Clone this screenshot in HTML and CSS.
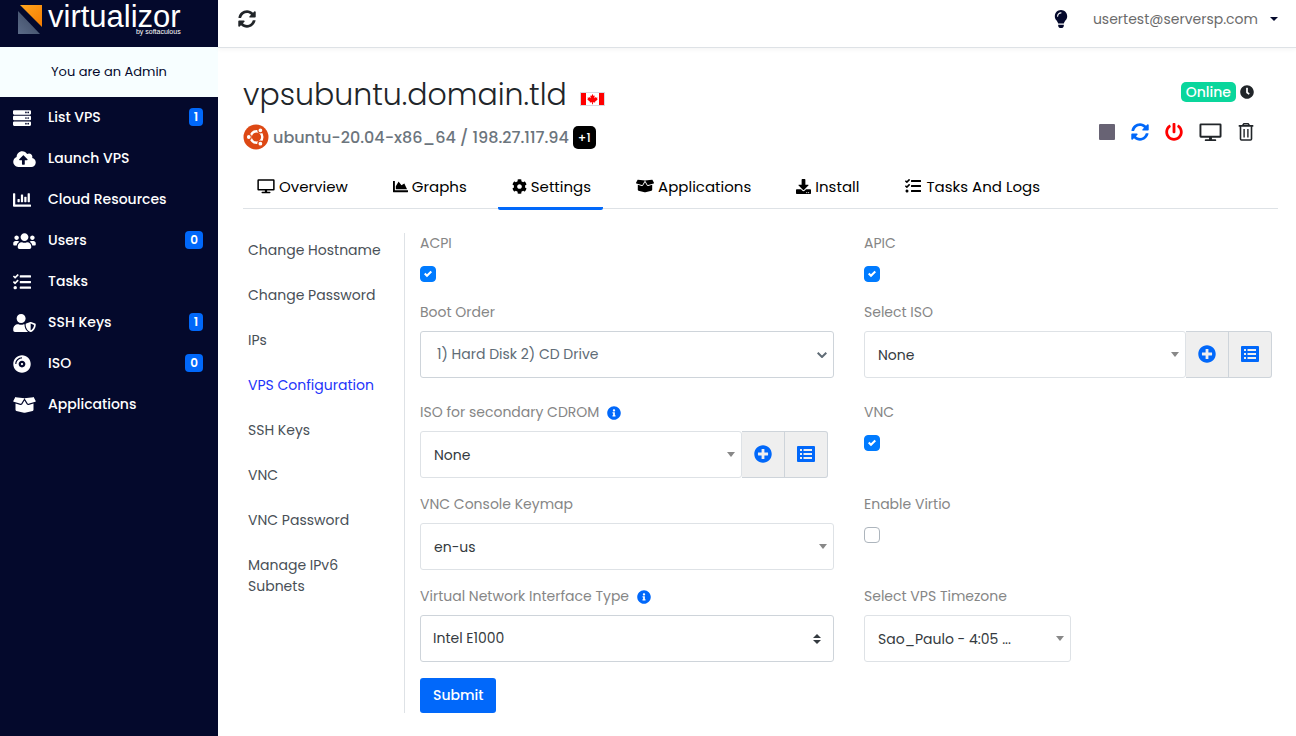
FILE: index.html
```html
<!DOCTYPE html>
<html lang="en">
<head>
  <meta charset="UTF-8">
  <meta name="viewport" content="width=device-width, initial-scale=1.0">
  <title>Virtualizor</title>
  <link rel="stylesheet" href="styles.css">
</head>
<body>

  <!-- Icon set -->
  <svg class="sprite" aria-hidden="true">
    <symbol id="i-sync" viewBox="0 0 512 512"><path d="M370.72 133.28C339.458 104.008 298.888 87.962 255.848 88c-77.458.068-144.328 53.178-162.791 126.85-1.344 5.363-6.122 9.15-11.651 9.15H24.103c-7.498 0-13.194-6.807-11.807-14.176C33.933 94.924 134.813 8 256 8c66.448 0 126.791 26.136 171.315 68.685L463.03 40.97C478.149 25.851 504 36.559 504 57.941V192c0 13.255-10.745 24-24 24H345.941c-21.382 0-32.09-25.851-16.971-40.971l41.75-41.749zM32 296h134.059c21.382 0 32.09 25.851 16.971 40.971l-41.75 41.75c31.262 29.273 71.835 45.319 114.876 45.28 77.418-.07 144.315-53.144 162.787-126.849 1.344-5.363 6.122-9.15 11.651-9.15h57.304c7.498 0 13.194 6.807 11.807 14.176C478.067 417.076 377.187 504 256 504c-66.448 0-126.791-26.136-171.315-68.685L48.97 471.03C33.851 486.149 8 475.441 8 454.059V320c0-13.255 10.745-24 24-24z"/></symbol>
    <symbol id="i-server" viewBox="0 0 512 512"><path fill-rule="evenodd" d="M32 32h448a32 32 0 0 1 32 32v64a32 32 0 0 1-32 32H32a32 32 0 0 1-32-32V64a32 32 0 0 1 32-32zm400 40a24 24 0 1 0 0 48 24 24 0 1 0 0-48zm-64 0a24 24 0 1 0 0 48 24 24 0 1 0 0-48zM32 192h448a32 32 0 0 1 32 32v64a32 32 0 0 1-32 32H32a32 32 0 0 1-32-32v-64a32 32 0 0 1 32-32zm400 40a24 24 0 1 0 0 48 24 24 0 1 0 0-48zm-64 0a24 24 0 1 0 0 48 24 24 0 1 0 0-48zM32 352h448a32 32 0 0 1 32 32v64a32 32 0 0 1-32 32H32a32 32 0 0 1-32-32v-64a32 32 0 0 1 32-32zm400 40a24 24 0 1 0 0 48 24 24 0 1 0 0-48zm-64 0a24 24 0 1 0 0 48 24 24 0 1 0 0-48z"/></symbol>
    <symbol id="i-upload" viewBox="0 0 640 512"><path d="M537.6 226.6c4.1-10.7 6.4-22.4 6.4-34.6 0-53-43-96-96-96-19.7 0-38.1 6-53.3 16.2C367 64.2 315.3 32 256 32c-88.4 0-160 71.6-160 160 0 2.7.1 5.4.2 8.1C40.2 219.8 0 273.2 0 336c0 79.5 64.5 144 144 144h368c70.7 0 128-57.3 128-128 0-61.9-44-113.6-102.4-125.4zM393.4 288H328v112c0 8.8-7.2 16-16 16h-48c-8.8 0-16-7.2-16-16V288h-65.4c-14.3 0-21.4-17.2-11.3-27.3l105.4-105.4c6.2-6.2 16.4-6.2 22.6 0l105.4 105.4c10.1 10.1 2.9 27.3-11.3 27.3z"/></symbol>
    <symbol id="i-bars" viewBox="0 0 512 512"><path d="M332.8 320h38.4c6.4 0 12.8-6.4 12.8-12.8V172.8c0-6.4-6.4-12.8-12.8-12.8h-38.4c-6.4 0-12.8 6.4-12.8 12.8v134.4c0 6.4 6.4 12.8 12.8 12.8zm96 0h38.4c6.4 0 12.8-6.4 12.8-12.8V76.8c0-6.4-6.4-12.8-12.8-12.8h-38.4c-6.4 0-12.8 6.4-12.8 12.8v230.4c0 6.4 6.4 12.8 12.8 12.8zm-288 0h38.4c6.4 0 12.8-6.4 12.8-12.8v-70.4c0-6.4-6.4-12.8-12.8-12.8h-38.4c-6.4 0-12.8 6.4-12.8 12.8v70.4c0 6.4 6.4 12.8 12.8 12.8zm96 0h38.4c6.4 0 12.8-6.4 12.8-12.8V108.8c0-6.4-6.4-12.8-12.8-12.8h-38.4c-6.4 0-12.8 6.4-12.8 12.8v198.4c0 6.4 6.4 12.8 12.8 12.8zM496 384H64V80c0-8.84-7.16-16-16-16H16C7.16 64 0 71.16 0 80v336c0 17.67 14.33 32 32 32h464c8.84 0 16-7.16 16-16v-32c0-8.84-7.16-16-16-16z"/></symbol>
    <symbol id="i-users" viewBox="0 0 640 512"><path d="M96 224c35.3 0 64-28.7 64-64s-28.7-64-64-64-64 28.7-64 64 28.7 64 64 64zm448 0c35.3 0 64-28.7 64-64s-28.7-64-64-64-64 28.7-64 64 28.7 64 64 64zm32 32h-64c-17.6 0-33.5 7.1-45.1 18.6 40.3 22.1 68.9 62 75.1 109.4h66c17.7 0 32-14.3 32-32v-32c0-35.3-28.7-64-64-64zm-256 0c61.9 0 112-50.1 112-112S381.9 32 320 32 208 82.1 208 144s50.1 112 112 112zm76.8 32h-8.3c-20.8 10-43.9 16-68.5 16s-47.6-6-68.5-16h-8.3C179.6 288 128 339.6 128 403.2V432c0 26.5 21.5 48 48 48h288c26.5 0 48-21.5 48-48v-28.8c0-63.6-51.6-115.2-115.2-115.2zm-223.7-13.4C161.5 263.1 145.6 256 128 256H64c-35.3 0-64 28.7-64 64v32c0 17.7 14.3 32 32 32h65.9c6.3-47.4 34.9-87.3 75.2-109.4z"/></symbol>
    <symbol id="i-tasks" viewBox="0 0 512 512"><path d="M139.61 35.5a12 12 0 0 0-17 0L58.93 98.81l-22.7-22.12a12 12 0 0 0-17 0L3.53 92.41a12 12 0 0 0 0 17l47.59 47.4a12.78 12.78 0 0 0 17.61 0l15.59-15.62L156.52 69a12.09 12.09 0 0 0 .09-17zm0 159.19a12 12 0 0 0-17 0l-63.68 63.72-22.7-22.1a12 12 0 0 0-17 0L3.53 252a12 12 0 0 0 0 17L51 316.5a12.77 12.77 0 0 0 17.6 0l15.7-15.69 72.2-72.22a12 12 0 0 0 .09-16.9zM64 368c-26.49 0-48.59 21.5-48.59 48S37.53 464 64 464a48 48 0 0 0 0-96zm432 16H208a16 16 0 0 0-16 16v32a16 16 0 0 0 16 16h288a16 16 0 0 0 16-16v-32a16 16 0 0 0-16-16zm0-320H208a16 16 0 0 0-16 16v32a16 16 0 0 0 16 16h288a16 16 0 0 0 16-16V80a16 16 0 0 0-16-16zm0 160H208a16 16 0 0 0-16 16v32a16 16 0 0 0 16 16h288a16 16 0 0 0 16-16v-32a16 16 0 0 0-16-16z"/></symbol>
    <symbol id="i-shield" viewBox="0 0 640 512"><path d="M622.3 271.1l-115.2-45c-4.1-1.6-12.6-3.7-22.2 0l-115.2 45c-10.7 4.2-17.7 14-17.7 24.9 0 111.6 68.7 188.8 132.9 213.9 9.6 3.7 18 1.6 22.2 0C558.4 489.9 640 420.5 640 296c0-10.9-7-20.7-17.7-24.9zM496 462.4V273.3l95.5 37.3c-5.6 87.1-60.9 135.4-95.5 151.8zM224 256c70.7 0 128-57.3 128-128S294.7 0 224 0 96 57.3 96 128s57.3 128 128 128zm96 40c0-2.5.8-4.8 1.1-7.2-2.5-.1-4.9-.8-7.5-.8h-16.7c-22.2 10.2-46.9 16-72.9 16s-50.6-5.8-72.9-16h-16.7C60.2 288 0 348.2 0 422.4V464c0 26.5 21.5 48 48 48h352c6.8 0 13.3-1.5 19.2-4-54-42.9-99.2-116.7-99.2-212z"/></symbol>
    <symbol id="i-disc" viewBox="0 0 496 512"><path d="M248 8C111 8 0 119 0 256s111 248 248 248 248-111 248-248S385 8 248 8zM88 256H56c0-105.9 86.1-192 192-192v32c-88.2 0-160 71.8-160 160zm160 96c-53 0-96-43-96-96s43-96 96-96 96 43 96 96-43 96-96 96zm0-128c-17.7 0-32 14.3-32 32s14.3 32 32 32 32-14.3 32-32-14.3-32-32-32z"/></symbol>
    <symbol id="i-box" viewBox="0 0 640 512"><path d="M425.7 256c-16.9 0-32.8-9-41.4-23.4L320 126l-64.2 106.6c-8.7 14.5-24.6 23.5-41.5 23.5-4.5 0-9-.6-13.3-1.9L64 215v178c0 14.7 10 27.5 24.2 31l216.2 54.1c10.2 2.5 20.9 2.5 31 0L551.8 424c14.2-3.6 24.2-16.4 24.2-31V215l-137 39.1c-4.3 1.3-8.8 1.9-13.3 1.9zm212.6-112.2L586.8 41c-3.1-6.2-9.8-9.8-16.7-8.9L320 64l91.7 152.1c3.8 6.3 11.4 9.3 18.5 7.3l197.9-56.5c9.9-2.9 14.7-13.9 10.2-23.1zM53.2 41L1.7 143.8c-4.6 9.2.3 20.2 10.1 23l197.9 56.5c7.1 2 14.7-1 18.5-7.3L320 64 69.8 32.1c-6.9-.8-13.5 2.7-16.6 8.9z"/></symbol>
    <symbol id="i-bulb" viewBox="0 0 352 512"><path d="M96.06 454.35c.01 6.29 1.87 12.45 5.36 17.69l17.09 25.69a31.99 31.99 0 0 0 26.64 14.28h61.71a31.99 31.99 0 0 0 26.64-14.28l17.09-25.69a31.989 31.989 0 0 0 5.36-17.69l.04-38.35H96.01l.05 38.35zM0 176c0 44.37 16.45 84.85 43.56 115.78 16.52 18.85 42.36 58.23 52.21 91.45.04.26.07.52.11.78h160.24c.04-.26.07-.51.11-.78 9.85-33.22 35.69-72.6 52.21-91.45C335.55 260.85 352 220.37 352 176 352 78.61 272.91-.3 175.45 0 73.44.31 0 82.97 0 176zm176-80c-44.11 0-80 35.89-80 80 0 8.84-7.16 16-16 16s-16-7.16-16-16c0-61.76 50.24-112 112-112 8.84 0 16 7.16 16 16s-7.16 16-16 16z"/></symbol>
    <symbol id="i-clock" viewBox="0 0 512 512"><path d="M256,8C119,8,8,119,8,256S119,504,256,504,504,393,504,256,393,8,256,8Zm92.49,313h0l-20,25a16,16,0,0,1-22.49,2.5h0l-67-49.72a40,40,0,0,1-15-31.23V112a16,16,0,0,1,16-16h32a16,16,0,0,1,16,16V256l58,42.5A16,16,0,0,1,348.49,321Z"/></symbol>
    <symbol id="i-power" viewBox="0 0 512 512"><path d="M400 54.1c63 45 104 118.6 104 201.9 0 136.8-110.8 247.7-247.5 248C120 504.3 8.2 393 8 256.4 7.9 173.1 48.9 99.3 111.8 54.2c11.7-8.3 28-4.8 35 7.7L162.6 90c5.9 10.5 3.1 23.8-6.6 31-41.5 30.8-68 79.6-68 134.9-.1 92.3 74.5 168.1 168 168.1 91.6 0 168.6-74.2 168-169.1-.3-51.8-24.7-101.8-68.1-134-9.7-7.2-12.4-20.5-6.5-30.9l15.8-28.1c7-12.4 23.2-16.1 34.8-7.8zM296 264V24c0-13.3-10.7-24-24-24h-32c-13.3 0-24 10.7-24 24v240c0 13.3 10.7 24 24 24h32c13.3 0 24-10.7 24-24z"/></symbol>
    <symbol id="i-screen" viewBox="0 0 24 20"><path fill-rule="evenodd" d="M2 1h20a1.500 1.500 0 0 1 1.500 1.500v12a1.500 1.500 0 0 1-1.500 1.500h-8.500v1.500H17a1 1 0 0 1 0 2H7a1 1 0 0 1 0-2h3.500V16H2a1.500 1.500 0 0 1-1.500-1.500v-12A1.500 1.500 0 0 1 2 1zm.5 2v11h19V3z"/></symbol>
    <symbol id="i-trash" viewBox="0 0 16 18"><path fill-rule="evenodd" d="M5.500 0h5l1.500 2h3.300v1.800h-1V16a1.800 1.800 0 0 1-1.800 1.800h-9A1.800 1.800 0 0 1 1.700 16V3.800h-1V2H4zm.8 1.500-.4.500h4.200l-.4-.5zM3.300 3.800v12.400h9.400V3.800zM5.400 6h1.400v8.400H5.400zM9.200 6h1.400v8.400H9.200z"/></symbol>
    <symbol id="i-area" viewBox="0 0 512 512"><path d="M500 384c6.600 0 12 5.400 12 12v40c0 6.600-5.400 12-12 12H12c-6.600 0-12-5.400-12-12V76c0-6.600 5.400-12 12-12h40c6.600 0 12 5.400 12 12v308h436zM372.700 159.500L288 216l-85.300-113.700c-5.100-6.800-15.500-6.300-19.900 1L96 248v104h384l-89.900-187.800c-3.200-6.500-11.400-8.700-17.400-4.700z"/></symbol>
    <symbol id="i-cog" viewBox="0 0 512 512"><path d="M487.4 315.700l-42.600-24.600c4.300-23.200 4.300-47 0-70.200l42.600-24.600c4.900-2.800 7.100-8.600 5.500-14-11.100-35.600-30-67.800-54.700-94.600-3.800-4.100-10-5.100-14.800-2.300L380.800 110c-17.900-15.400-38.500-27.300-60.800-35.100V25.800c0-5.600-3.900-10.500-9.400-11.700-36.700-8.200-74.300-7.800-109.200 0-5.500 1.200-9.400 6.100-9.400 11.700V75c-22.200 7.900-42.800 19.800-60.800 35.100L88.700 85.500c-4.900-2.800-11-1.900-14.800 2.300-24.700 26.700-43.600 58.900-54.700 94.600-1.700 5.400.6 11.200 5.500 14L67.300 221c-4.300 23.200-4.300 47 0 70.200l-42.600 24.600c-4.900 2.800-7.100 8.600-5.500 14 11.100 35.600 30 67.800 54.700 94.600 3.800 4.100 10 5.100 14.800 2.300l42.600-24.600c17.900 15.400 38.500 27.300 60.800 35.100v49.200c0 5.600 3.900 10.500 9.400 11.700 36.700 8.200 74.300 7.800 109.200 0 5.500-1.200 9.400-6.100 9.400-11.700v-49.200c22.200-7.900 42.800-19.800 60.800-35.100l42.600 24.600c4.900 2.800 11 1.900 14.800-2.300 24.700-26.700 43.600-58.900 54.700-94.600 1.500-5.500-.7-11.300-5.600-14.100zM256 336c-44.100 0-80-35.900-80-80s35.900-80 80-80 80 35.900 80 80-35.900 80-80 80z"/></symbol>
    <symbol id="i-download" viewBox="0 0 512 512"><path d="M216 0h80c13.300 0 24 10.700 24 24v168h87.700c17.800 0 26.700 21.500 14.100 34.100L269.700 378.300c-7.500 7.500-19.800 7.500-27.300 0L90.100 226.100c-12.600-12.600-3.700-34.100 14.100-34.100H192V24c0-13.300 10.700-24 24-24zm296 376v112c0 13.300-10.700 24-24 24H24c-13.300 0-24-10.700-24-24V376c0-13.300 10.700-24 24-24h146.700l49 49c20.100 20.100 52.500 20.100 72.600 0l49-49H488c13.300 0 24 10.700 24 24zm-124 88c0-11-9-20-20-20s-20 9-20 20 9 20 20 20 20-9 20-20zm64 0c0-11-9-20-20-20s-20 9-20 20 9 20 20 20 20-9 20-20z"/></symbol>
    <symbol id="i-plus" viewBox="0 0 512 512"><path d="M256 8C119 8 8 119 8 256s111 248 248 248 248-111 248-248S393 8 256 8zm144 276c0 6.600-5.400 12-12 12h-92v92c0 6.600-5.400 12-12 12h-56c-6.600 0-12-5.400-12-12v-92h-92c-6.600 0-12-5.400-12-12v-56c0-6.600 5.400-12 12-12h92v-92c0-6.600 5.400-12 12-12h56c6.600 0 12 5.400 12 12v92h92c6.600 0 12 5.400 12 12v56z"/></symbol>
    <symbol id="i-list" viewBox="0 0 18 16"><path fill-rule="evenodd" d="M1 0h16a1 1 0 0 1 1 1v14a1 1 0 0 1-1 1H1a1 1 0 0 1-1-1V1a1 1 0 0 1 1-1zm2 3v2h2V3zm3.500 0v2H15V3zM3 7v2h2V7zm3.500 0v2H15V7zM3 11v2h2v-2zm3.500 0v2H15v-2z"/></symbol>
    <symbol id="i-info" viewBox="0 0 512 512"><path d="M256 8C119.043 8 8 119.083 8 256c0 136.997 111.043 248 248 248s248-111.003 248-248C504 119.083 392.957 8 256 8zm0 110c23.196 0 42 18.804 42 42s-18.804 42-42 42-42-18.804-42-42 18.804-42 42-42zm56 254c0 6.627-5.373 12-12 12h-88c-6.627 0-12-5.373-12-12v-24c0-6.627 5.373-12 12-12h12v-64h-12c-6.627 0-12-5.373-12-12v-24c0-6.627 5.373-12 12-12h64c6.627 0 12 5.373 12 12v100h12c6.627 0 12 5.373 12 12v24z"/></symbol>
  </svg>

  <div class="layout">

    <!-- Sidebar -->
    <aside class="sidebar">
      <a class="logo" href="#">
        <svg class="logo-mark" viewBox="0 0 24 29" aria-hidden="true">
          <defs>
            <linearGradient id="orange" x1="0" y1="0" x2="1" y2="1"><stop offset="0" stop-color="#ffa51f"/><stop offset="1" stop-color="#f57c00"/></linearGradient>
            <linearGradient id="slate" x1="0" y1="1" x2="1" y2="0"><stop offset="0" stop-color="#5c6b88"/><stop offset="1" stop-color="#38465f"/></linearGradient>
          </defs>
          <path fill="url(#orange)" d="M2 0h22v22z"/>
          <path fill="url(#slate)" d="M0 6v23h22z"/>
        </svg>
        <span class="logo-text">
          <span class="logo-name">virtualizor</span>
          <span class="logo-by">by softaculous</span>
        </span>
      </a>
      <p class="role">You are an Admin</p>
      <nav class="menu">
        <a href="#"><span class="menu-icon"><svg class="ic-lg"><use href="#i-server"/></svg></span>List VPS<span class="count">1</span></a>
        <a href="#"><span class="menu-icon"><svg class="ic-wide"><use href="#i-upload"/></svg></span>Launch VPS</a>
        <a href="#"><span class="menu-icon"><svg class="ic-lg"><use href="#i-bars"/></svg></span>Cloud Resources</a>
        <a href="#"><span class="menu-icon"><svg class="ic-wide"><use href="#i-users"/></svg></span>Users<span class="count">0</span></a>
        <a href="#"><span class="menu-icon"><svg class="ic-lg"><use href="#i-tasks"/></svg></span>Tasks</a>
        <a href="#"><span class="menu-icon"><svg class="ic-wide"><use href="#i-shield"/></svg></span>SSH Keys<span class="count">1</span></a>
        <a href="#"><span class="menu-icon"><svg class="ic-lg"><use href="#i-disc"/></svg></span>ISO<span class="count">0</span></a>
        <a href="#"><span class="menu-icon"><svg class="ic-wide"><use href="#i-box"/></svg></span>Applications</a>
      </nav>
    </aside>

    <div class="page">

      <!-- Top bar -->
      <header class="topbar">
        <button type="button" class="icon-btn" aria-label="Refresh"><svg class="ic-lg"><use href="#i-sync"/></svg></button>
        <div class="topbar-right">
          <button type="button" class="icon-btn bulb" aria-label="Theme"><svg class="ic-lg"><use href="#i-bulb"/></svg></button>
          <button type="button" class="account">usertest@serversp.com<span class="caret"></span></button>
        </div>
      </header>

      <main class="content">

        <!-- VPS heading -->
        <div class="vps-head">
          <div class="vps-info">
            <h1>vpsubuntu.domain.tld
              <svg class="flag" viewBox="0 0 25 14" role="img" aria-label="Canada">
                <rect width="25" height="14" fill="#d9d9e0"/>
                <rect x="1" y="1" width="23" height="12" fill="#fff"/>
                <path fill="#f00" d="M1 1h5v12H1zM19 1h5v12h-5zM12.500 2l1.100 2 1.100-.5-.4 2.700 1.600-1.300.4.800 1.200-.1-.4 1.400.6.500-2.700 2.300.2.800-2.300-.3.100 1.900h-1l.1-1.900-2.300.3.200-.8-2.700-2.300.6-.5-.4-1.400 1.200.1.400-.8 1.600 1.300-.4-2.700 1.100.5z"/>
              </svg>
            </h1>
            <p class="vps-sub">
              <svg class="ubuntu" viewBox="0 0 26 26" aria-hidden="true">
                <circle cx="13" cy="13" r="12.500" fill="#dd4814"/>
                <circle cx="13.500" cy="13" r="5.800" fill="none" stroke="#fff" stroke-width="2.400"/>
                <g fill="#fff" stroke="#dd4814" stroke-width="1.200"><circle cx="5.800" cy="13" r="2.500"/><circle cx="17.400" cy="6.300" r="2.500"/><circle cx="17.400" cy="19.700" r="2.500"/></g>
              </svg>
              <span>ubuntu-20.04-x86_64 / 198.27.117.94</span>
              <span class="more">+1</span>
            </p>
          </div>
          <div class="vps-side">
            <div class="status"><span class="online">Online</span><svg class="ic-sm"><use href="#i-clock"/></svg></div>
            <div class="actions">
              <button type="button" class="icon-btn" aria-label="Stop"><span class="stop"></span></button>
              <button type="button" class="icon-btn blue" aria-label="Restart"><svg class="ic-lg"><use href="#i-sync"/></svg></button>
              <button type="button" class="icon-btn red" aria-label="Power off"><svg class="ic-lg"><use href="#i-power"/></svg></button>
              <button type="button" class="icon-btn" aria-label="Console"><svg class="ic-screen"><use href="#i-screen"/></svg></button>
              <button type="button" class="icon-btn" aria-label="Delete"><svg class="ic-trash"><use href="#i-trash"/></svg></button>
            </div>
          </div>
        </div>

        <!-- Tabs -->
        <nav class="tabs">
          <a href="#"><svg class="ic-tab"><use href="#i-screen"/></svg>Overview</a>
          <a href="#"><svg class="ic-md"><use href="#i-area"/></svg>Graphs</a>
          <a href="#" class="active"><svg class="ic-md"><use href="#i-cog"/></svg>Settings</a>
          <a href="#"><svg class="ic-tab"><use href="#i-box"/></svg>Applications</a>
          <a href="#"><svg class="ic-md"><use href="#i-download"/></svg>Install</a>
          <a href="#"><svg class="ic-tab"><use href="#i-tasks"/></svg>Tasks And Logs</a>
        </nav>

        <div class="settings">
          <nav class="subnav">
            <a href="#">Change Hostname</a>
            <a href="#">Change Password</a>
            <a href="#">IPs</a>
            <a href="#" class="active">VPS Configuration</a>
            <a href="#">SSH Keys</a>
            <a href="#">VNC</a>
            <a href="#">VNC Password</a>
            <a href="#">Manage IPv6 Subnets</a>
          </nav>

          <!-- VPS configuration form -->
          <form class="config">
            <div class="field">
              <label for="acpi">ACPI</label>
              <input type="checkbox" id="acpi" checked>
            </div>
            <div class="field">
              <label for="apic">APIC</label>
              <input type="checkbox" id="apic" checked>
            </div>

            <div class="field boot">
              <label for="boot">Boot Order</label>
              <select id="boot" class="select-chevron">
                <option>1) Hard Disk 2) CD Drive</option>
              </select>
            </div>
            <div class="field">
              <label for="iso">Select ISO</label>
              <div class="group">
                <select id="iso"><option>None</option></select>
                <button type="button" aria-label="Add ISO"><svg class="ic-lg"><use href="#i-plus"/></svg></button>
                <button type="button" aria-label="List ISOs"><svg class="ic-lg"><use href="#i-list"/></svg></button>
              </div>
            </div>

            <div class="field">
              <label for="iso2">ISO for secondary CDROM <svg class="ic-sm"><use href="#i-info"/></svg></label>
              <div class="group">
                <select id="iso2"><option>None</option></select>
                <button type="button" aria-label="Add secondary ISO"><svg class="ic-lg"><use href="#i-plus"/></svg></button>
                <button type="button" aria-label="List secondary ISOs"><svg class="ic-lg"><use href="#i-list"/></svg></button>
              </div>
            </div>
            <div class="field">
              <label for="vnc">VNC</label>
              <input type="checkbox" id="vnc" checked>
            </div>

            <div class="field">
              <label for="keymap">VNC Console Keymap</label>
              <select id="keymap"><option>en-us</option></select>
            </div>
            <div class="field">
              <label for="virtio">Enable Virtio</label>
              <input type="checkbox" id="virtio">
            </div>

            <div class="field">
              <label for="nic">Virtual Network Interface Type <svg class="ic-sm"><use href="#i-info"/></svg></label>
              <select id="nic" class="select-sort"><option>Intel E1000</option></select>
            </div>
            <div class="field">
              <label for="timezone">Select VPS Timezone</label>
              <select id="timezone" class="half"><option>Sao_Paulo - 4:05 ...</option></select>
            </div>

            <button type="submit" class="submit">Submit</button>
          </form>
        </div>
      </main>
    </div>
  </div>

</body>
</html>
```
FILE: styles.css
```css
* {
  box-sizing: border-box;
  margin: 0;
  padding: 0;
}

body {
  font-family: Poppins, Inter, "Open Sans", sans-serif;
  font-size: 14px;
  line-height: 21px;
  background-color: #fff;
  color: #212529;
}

a {
  color: inherit;
  text-decoration: none;
}

button, select {
  font: inherit;
  color: inherit;
}

button {
  border: none;
  background: none;
  cursor: pointer;
}

svg {
  display: block;
  flex: none;
  fill: currentColor;
}

.sprite {
  display: none;
}

/* Icon sizes */
.ic-sm { width: 14px; height: 14px; }
.ic-md { width: 15px; height: 15px; }
.ic-lg { width: 18px; height: 18px; }
.ic-wide { width: 23px; height: 18px; }
.ic-tab { width: 18px; height: 16px; }
.ic-screen { width: 23px; height: 20px; }
.ic-trash { width: 16px; height: 18px; }

.layout {
  display: flex;
  min-height: 100vh;
}

/* Sidebar */
.sidebar {
  flex: none;
  width: 218px;
  background-color: #04092c;
  color: #fff;
}

.logo {
  display: flex;
  align-items: flex-start;
  gap: 6px;
  height: 47px;
  padding: 5px 18px;
}

.logo-mark {
  width: 24px;
  height: 29px;
}

.logo-text {
  display: flex;
  flex-direction: column;
  align-items: flex-end;
  font-family: "Liberation Sans", Arial, sans-serif;
}

.logo-name {
  font-size: 31px;
  line-height: 23px;
}

.logo-by {
  font-size: 7px;
  line-height: 8px;
}

.role {
  padding: 14px 0 15px;
  background-color: #f7feff;
  color: #04092c;
  font-size: 13px;
  text-align: center;
}

.menu a {
  display: flex;
  align-items: center;
  height: 41px;
  padding: 0 15px 0 13px;
  font-weight: 500;
}

.menu-icon {
  width: 35px;
}

.count {
  margin: 0 0 2px auto;
  padding: 0 5px;
  border-radius: 4px;
  background-color: #0168fa;
  font-size: 12px;
  font-weight: 600;
  line-height: 18px;
}

/* Top bar */
.page {
  flex: 1;
  min-width: 0;
}

.topbar {
  display: flex;
  justify-content: space-between;
  align-items: center;
  height: 48px;
  padding: 0 18px 9px 20px;
  border-bottom: 1px solid #dee2e6;
  box-shadow: 0 2px 4px rgba(0, 0, 0, 0.04);
}

.topbar-right {
  display: flex;
  align-items: center;
  gap: 23px;
}

.icon-btn {
  display: flex;
}

.bulb {
  color: #04092c;
}

.account {
  display: flex;
  align-items: center;
  gap: 12px;
  color: #6b6b6b;
}

.caret {
  border: 4px solid transparent;
  border-top-color: #04092c;
  border-bottom: none;
}

/* VPS heading */
.content {
  padding: 24px 18px 23px 25px;
}

.vps-head {
  display: flex;
  justify-content: space-between;
}

h1 {
  display: flex;
  align-items: center;
  gap: 13px;
  font-size: 30px;
  font-weight: 300;
  line-height: 46px;
}

.flag {
  width: 25px;
  height: 14px;
  margin-top: 8px;
}

.vps-sub {
  display: flex;
  align-items: center;
  gap: 4px;
  height: 38px;
  color: #6c757d;
  font-size: 16px;
  font-weight: 500;
}

.ubuntu {
  width: 26px;
  height: 26px;
}

.more {
  padding: 0 5px;
  border-radius: 5px;
  background-color: #000;
  color: #fff;
  font-size: 12px;
  line-height: 23px;
}

.vps-side {
  padding: 10px 24px 0 0;
}

.status {
  display: flex;
  justify-content: flex-end;
  align-items: center;
  gap: 4px;
}

.online {
  padding: 0 5px;
  border-radius: 5px;
  background-color: #0ad69c;
  color: #fff;
  font-weight: 500;
  line-height: 20px;
}

.actions {
  display: flex;
  align-items: center;
  gap: 16px;
  height: 60px;
}

.stop {
  width: 16px;
  height: 16px;
  border-radius: 1px;
  background-color: #686374;
}

.blue {
  color: #0168fa;
}

.red {
  color: #f00;
}

/* Tabs */
.tabs {
  display: flex;
  gap: 19px;
  border-bottom: 1px solid #dee2e6;
  color: #000;
  font-size: 15px;
}

.tabs a {
  display: flex;
  align-items: center;
  gap: 4px;
  height: 48px;
  margin-bottom: -2px;
  padding: 3px 12px 0 14px;
  border-bottom: 3px solid transparent;
}

.tabs .active {
  border-bottom-color: #0168fa;
  border-radius: 2px;
}

/* Settings */
.settings {
  display: flex;
  padding-top: 24px;
}

.subnav {
  flex: none;
  width: 162px;
  border-right: 1px solid #dee2e6;
  color: #495057;
}

.subnav a {
  display: block;
  padding: 7px 20px 17px 5px;
}

.subnav .active {
  color: #2334fa;
}

.config {
  flex: 1;
  display: grid;
  grid-template-columns: 1fr 1fr;
  column-gap: 30px;
  padding-left: 15px;
}

.field {
  margin-bottom: 16px;
}

.boot {
  margin-bottom: 24px;
}

label {
  display: flex;
  align-items: center;
  gap: 8px;
  margin-bottom: 8px;
  color: #868686;
}

label svg {
  color: #0168fa;
}

select {
  display: block;
  width: 100%;
  height: 47px;
  padding: 2px 13px 0;
  border: 1px solid #dee2e6;
  border-radius: 3px;
  background: #fff url("data:image/svg+xml,%3Csvg xmlns='http://www.w3.org/2000/svg' width='8' height='5'%3E%3Cpath fill='%23888' d='M0 0h8L4 5z'/%3E%3C/svg%3E") no-repeat right 6px center;
  appearance: none;
  color: #343a40;
}

.select-chevron {
  padding: 0 16px;
  border-color: #ced4da;
  background-image: url("data:image/svg+xml,%3Csvg xmlns='http://www.w3.org/2000/svg' width='10' height='6'%3E%3Cpath fill='none' stroke='%23606c76' stroke-width='2' d='M.7.7 5 5 9.300.7'/%3E%3C/svg%3E");
  color: #606c76;
}

.select-sort {
  padding: 0 12px;
  border-color: #ced4da;
  background-image: url("data:image/svg+xml,%3Csvg xmlns='http://www.w3.org/2000/svg' width='8' height='10'%3E%3Cpath fill='%23343a40' d='M0 4h8L4 0zM0 6h8l-4 4z'/%3E%3C/svg%3E");
  background-position: right 12px center;
}

.half {
  width: 50%;
}

.group {
  display: flex;
  margin-right: 6px;
}

.group select {
  flex: 1;
}

.group button {
  display: flex;
  align-items: center;
  justify-content: center;
  width: 43px;
  padding-bottom: 2px;
  border: 1px solid #ced4da;
  border-left: none;
  background-color: #efefef;
  color: #0168fa;
}

.group button:last-child {
  border-radius: 0 3px 3px 0;
}

input[type="checkbox"] {
  display: block;
  width: 16px;
  height: 16px;
  margin: 12px 0 4px;
  border: 1px solid #adb5bd;
  border-radius: 4px;
  appearance: none;
}

input[type="checkbox"]:checked {
  border-color: #007bff;
  background: #007bff url("data:image/svg+xml,%3Csvg xmlns='http://www.w3.org/2000/svg' width='8' height='8' viewBox='0 0 8 8'%3E%3Cpath fill='%23fff' d='M6.564.75l-3.590 3.612-1.538-1.550L0 4.260l2.974 2.990L8 2.193z'/%3E%3C/svg%3E") no-repeat center;
}

.submit {
  justify-self: start;
  height: 35px;
  padding: 0 13px;
  border-radius: 3px;
  background-color: #0168fa;
  color: #fff;
  font-weight: 500;
}

@media (max-width: 900px) {
  .config {
    grid-template-columns: 1fr;
  }

  .tabs {
    flex-wrap: wrap;
  }
}
```
